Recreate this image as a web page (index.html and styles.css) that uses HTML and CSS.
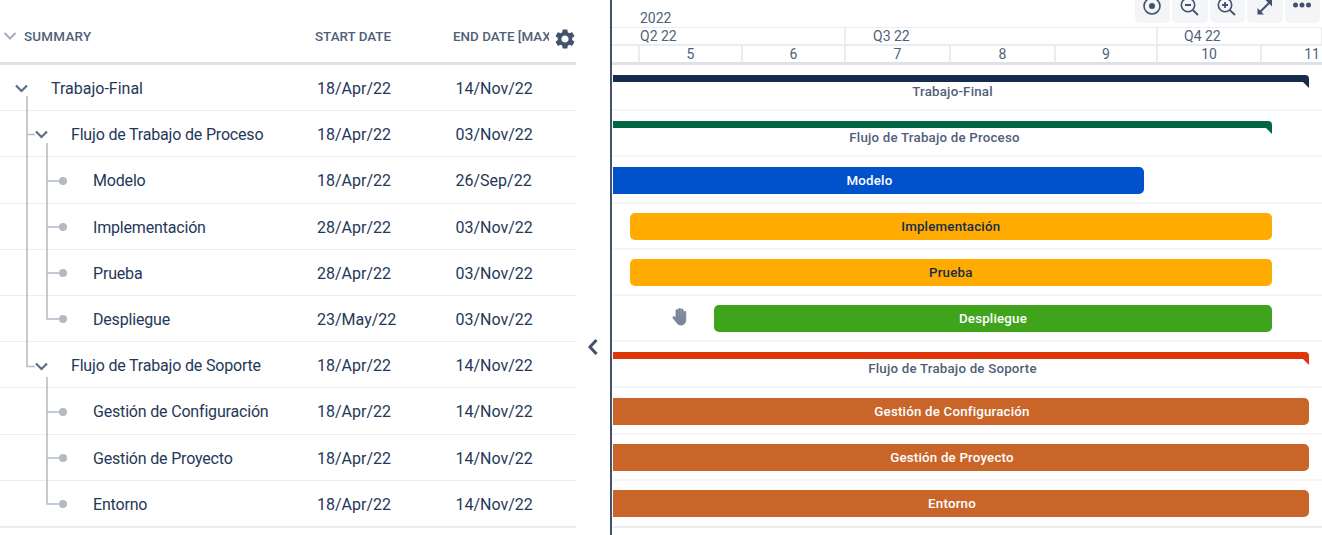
FILE: index.html
```html
<!DOCTYPE html>
<html lang="en">
<head>
    <meta charset="UTF-8">
    <title>Gantt</title>
    <link rel="stylesheet" href="styles.css">
</head>
<body>
    <div class="table">
        <div class="table-head">
            <svg class="head-chevron" width="14" height="10" viewBox="0 0 14 10"><path d="M1.500 2 7 7.500 12.500 2" fill="none" stroke="#a5adba" stroke-width="2"/></svg>
            <div class="head-summary">SUMMARY</div>
            <div class="head-start">START DATE</div>
            <div class="head-end">END DATE [MAX]</div>
            <svg class="gear" width="24" height="24" viewBox="0 0 24 24"><path fill="#42526e" d="M19.14 12.94c.04-.3.06-.61.06-.94 0-.32-.02-.64-.07-.94l2.03-1.58a.49.49 0 0 0 .12-.61l-1.92-3.32a.488.488 0 0 0-.59-.22l-2.39.96c-.5-.38-1.03-.7-1.62-.94l-.36-2.54a.484.484 0 0 0-.48-.41h-3.84c-.24 0-.43.17-.47.41l-.36 2.54c-.59.24-1.13.57-1.62.94l-2.39-.96c-.22-.08-.47 0-.59.22L2.74 8.87c-.12.21-.08.47.12.61l2.03 1.58c-.05.3-.09.63-.09.94s.02.64.07.94l-2.03 1.58a.49.49 0 0 0-.12.61l1.92 3.32c.12.22.37.29.59.22l2.39-.96c.5.38 1.03.7 1.62.94l.36 2.54c.05.24.24.41.48.41h3.84c.24 0 .44-.17.47-.41l.36-2.54c.59-.24 1.13-.56 1.62-.94l2.39.96c.22.08.47 0 .59-.22l1.92-3.32c.12-.22.07-.47-.12-.61l-2.01-1.58zM12 15.6c-1.98 0-3.6-1.62-3.6-3.6s1.62-3.6 3.6-3.6 3.6 1.62 3.6 3.6-1.62 3.6-3.6 3.6z"/></svg>
        </div>
        <div class="rows">
            <div class="row"><div class="col-summary lvl0">Trabajo-Final</div><div class="col-start">18/Apr/22</div><div class="col-end">14/Nov/22</div></div>
            <div class="row"><div class="col-summary lvl1">Flujo de Trabajo de Proceso</div><div class="col-start">18/Apr/22</div><div class="col-end">03/Nov/22</div></div>
            <div class="row"><div class="col-summary lvl2">Modelo</div><div class="col-start">18/Apr/22</div><div class="col-end">26/Sep/22</div></div>
            <div class="row"><div class="col-summary lvl2">Implementación</div><div class="col-start">28/Apr/22</div><div class="col-end">03/Nov/22</div></div>
            <div class="row"><div class="col-summary lvl2">Prueba</div><div class="col-start">28/Apr/22</div><div class="col-end">03/Nov/22</div></div>
            <div class="row"><div class="col-summary lvl2">Despliegue</div><div class="col-start">23/May/22</div><div class="col-end">03/Nov/22</div></div>
            <div class="row"><div class="col-summary lvl1">Flujo de Trabajo de Soporte</div><div class="col-start">18/Apr/22</div><div class="col-end">14/Nov/22</div></div>
            <div class="row"><div class="col-summary lvl2">Gestión de Configuración</div><div class="col-start">18/Apr/22</div><div class="col-end">14/Nov/22</div></div>
            <div class="row"><div class="col-summary lvl2">Gestión de Proyecto</div><div class="col-start">18/Apr/22</div><div class="col-end">14/Nov/22</div></div>
            <div class="row"><div class="col-summary lvl2">Entorno</div><div class="col-start">18/Apr/22</div><div class="col-end">14/Nov/22</div></div>

            <!-- tree connectors, y is relative to the top of the rows -->
            <svg class="tree" width="80" height="470" viewBox="0 0 80 470">
                <g fill="none" stroke="#b3bac5" stroke-width="1.500">
                    <path d="M27 31V301.500H35"/>
                    <path d="M27.500 69.500H35"/>
                    <path d="M47 78V254H59M47 116H59M47 162H59M47 208H59"/>
                    <path d="M47 312V439H59M47 347H59M47 393H59"/>
                </g>
                <g fill="#b3bac5">
                    <circle cx="63" cy="116" r="4"/>
                    <circle cx="63" cy="162" r="4"/>
                    <circle cx="63" cy="208" r="4"/>
                    <circle cx="63" cy="254" r="4"/>
                    <circle cx="63" cy="347" r="4"/>
                    <circle cx="63" cy="393" r="4"/>
                    <circle cx="63" cy="439" r="4"/>
                </g>
                <g fill="none" stroke="#5e6c84" stroke-width="2.200">
                    <path d="M16 20.500 21.500 26 27 20.500"/>
                    <path d="M36 66.500 41.500 72 47 66.500"/>
                    <path d="M36 298.500 41.500 304 47 298.500"/>
                </g>
            </svg>
        </div>
    </div>

    <div class="splitter">
        <svg width="12" height="18" viewBox="0 0 12 18"><path d="M9.500 2 3 9l6.500 7" fill="none" stroke="#42526e" stroke-width="3"/></svg>
    </div>

    <div class="gantt">
        <div class="toolbar">
            <button class="tool"><svg width="20" height="20" viewBox="0 0 20 20"><circle cx="10" cy="6" r="8" fill="none" stroke="#42526e" stroke-width="1.600"/><circle cx="10" cy="6" r="3" fill="#42526e"/></svg></button>
            <button class="tool"><svg width="20" height="20" viewBox="0 0 20 20"><circle cx="8" cy="5" r="6.700" fill="none" stroke="#42526e" stroke-width="1.600"/><path d="M12.800 10 18 15M5 5h6" fill="none" stroke="#42526e" stroke-width="1.800"/></svg></button>
            <button class="tool"><svg width="20" height="20" viewBox="0 0 20 20"><circle cx="8" cy="5" r="6.700" fill="none" stroke="#42526e" stroke-width="1.600"/><path d="M12.800 10 18 15M5 5h6M8 2v6" fill="none" stroke="#42526e" stroke-width="1.800"/></svg></button>
            <button class="tool"><svg width="20" height="20" viewBox="0 0 20 20"><path d="M4 13 15 2" stroke="#42526e" stroke-width="2" fill="none"/><path d="M2.500 8v6.500H9zM17 0h-6.500l6.500 6.500z" fill="#42526e"/></svg></button>
            <button class="tool"><svg width="20" height="20" viewBox="0 0 20 20"><g fill="#42526e"><circle cx="3.500" cy="5" r="2.500"/><circle cx="10" cy="5" r="2.500"/><circle cx="16.500" cy="5" r="2.500"/></g></svg></button>
        </div>

        <div class="timeline">
            <div class="band band-year"><span>2022</span></div>
            <div class="band band-quarter">
                <div class="q" style="width: 234px">Q2 22</div>
                <div class="q" style="width: 312px">Q3 22</div>
                <div class="q q-last" style="width: 165px">Q4 22</div>
            </div>
            <div class="band band-month">
                <div class="m" style="width: 28px"></div>
                <div class="m" style="width: 103px">5</div>
                <div class="m" style="width: 103px">6</div>
                <div class="m" style="width: 105px">7</div>
                <div class="m" style="width: 105px">8</div>
                <div class="m" style="width: 102px">9</div>
                <div class="m" style="width: 104px">10</div>
                <div class="m m-last">11</div>
            </div>
        </div>

        <div class="bars">
            <div class="lane"><div class="summary-bar navy" style="margin-left: -18px; width: 714px"></div><div class="summary-label" style="width: 679px">Trabajo-Final</div></div>
            <div class="lane"><div class="summary-bar green" style="margin-left: -18px; width: 677px"></div><div class="summary-label" style="width: 643px">Flujo de Trabajo de Proceso</div></div>
            <div class="lane"><div class="bar blue" style="margin-left: -18px; width: 549px">Modelo</div></div>
            <div class="lane"><div class="bar amber" style="margin-left: 16.500px; width: 642.500px">Implementación</div></div>
            <div class="lane"><div class="bar amber" style="margin-left: 16.500px; width: 642.500px">Prueba</div></div>
            <div class="lane">
                <div class="bar lime" style="margin-left: 101px; width: 558px">Despliegue</div>
                <svg class="hand" width="18" height="18" viewBox="0 0 18 18"><path fill="#7a869a" stroke="#7a869a" stroke-width=".8" d="M5 2.500a1 1 0 0 1 2 0V8h.6V1.300a1 1 0 0 1 2 0V8h.6V2a1 1 0 0 1 2 0v6.500h.6V4.300a1 1 0 0 1 2 0V12c0 3-2 5-4.500 5H9.500C7.500 17 6.500 16 5.500 14.500L2.200 10.300c-.9-1.200.5-2.300 1.500-1.400L5 10z"/></svg>
            </div>
            <div class="lane"><div class="summary-bar red" style="margin-left: -18px; width: 714px"></div><div class="summary-label" style="width: 679px">Flujo de Trabajo de Soporte</div></div>
            <div class="lane"><div class="bar orange" style="margin-left: -18px; width: 714px">Gestión de Configuración</div></div>
            <div class="lane"><div class="bar orange" style="margin-left: -18px; width: 714px">Gestión de Proyecto</div></div>
            <div class="lane"><div class="bar orange" style="margin-left: -18px; width: 714px">Entorno</div></div>
        </div>
    </div>
</body>
</html>
```

FILE: styles.css
```css
html, body {
    margin: 0;
    height: 535px;
    overflow: hidden;
    background: #fff;
}
body {
    display: flex;
    font-family: Roboto, "Liberation Sans", sans-serif;
    color: #253858;
}

/* left table */
.table {
    width: 576px;
    flex: none;
}
.table-head {
    position: relative;
    display: flex;
    align-items: center;
    height: 65px;
    padding-top: 10px;
    box-sizing: border-box;
    border-bottom: 3px solid #dfe1e6;
    font-size: 13.400px;
    font-weight: 500;
    color: #505f79;
}
.head-chevron {
    position: absolute;
    left: 3px;
    top: 31px;
}
.gear {
    position: absolute;
    left: 553px;
    top: 27px;
}
.head-summary {
    padding-left: 24px;
    width: 291px;
    flex: none;
    letter-spacing: 0.25px;
}
.head-start {
    width: 138px;
    flex: none;
}
.head-end {
    width: 96px;
    flex: none;
    overflow: hidden;
    white-space: nowrap;
}
.rows {
    position: relative;
}
.row {
    display: flex;
    align-items: center;
    height: 46.200px;
    padding-top: 2px;
    box-sizing: border-box;
    border-bottom: 1px solid #ebecf0;
    font-size: 16px;
}
.row:last-of-type {
    height: 47.200px;
    border-bottom-width: 2px;
}
.col-summary {
    width: 317px;
    flex: none;
    box-sizing: border-box;
}
.col-start {
    width: 138.500px;
    flex: none;
}
.col-end {
    flex: none;
}
.lvl0 {
    padding-left: 51px;
}
.lvl1 {
    padding-left: 71px;
    letter-spacing: -0.18px;
}
.lvl2 {
    padding-left: 93px;
    letter-spacing: -0.18px;
}
.tree {
    position: absolute;
    left: 0;
    top: 0;
}

/* collapse handle between table and chart */
.splitter {
    width: 34px;
    flex: none;
    display: flex;
    align-items: flex-start;
    justify-content: center;
    padding-top: 338px;
    box-sizing: border-box;
}

/* chart */
.gantt {
    position: relative;
    flex: 1;
    min-width: 0;
    border-left: 2px solid #42526e;
}
.toolbar {
    position: absolute;
    right: 2px;
    top: 0;
    display: flex;
    gap: 2px;
}
.tool {
    width: 35.500px;
    height: 23px;
    padding: 0;
    border: none;
    border-radius: 0 0 5px 5px;
    background: #f4f5f7;
    display: flex;
    justify-content: center;
}
.timeline {
    height: 65px;
    color: #505f79;
    font-size: 14px;
    border-bottom: 3px solid #dfe1e6;
    box-sizing: border-box;
}
.band {
    box-sizing: border-box;
    display: flex;
    white-space: nowrap;
}
.band-year {
    height: 28px;
    padding: 10px 0 0 28px;
    line-height: 17px;
    border-bottom: 1px solid #ebecf0;
}
.band-quarter {
    height: 18px;
    line-height: 16px;
    border-bottom: 2px solid #ebecf0;
}
.q {
    flex: none;
    box-sizing: border-box;
    padding-left: 27px;
    border-right: 2px solid #ebecf0;
}
.q:first-child {
    padding-left: 28px;
}
.q-last {
    padding-left: 26px;
}
.band-month {
    height: 16px;
    line-height: 17px;
}
.m {
    flex: none;
    box-sizing: border-box;
    text-align: center;
    border-right: 2px solid #ebecf0;
}
.m-last {
    border-right: none;
    width: 100px;
}
.bars {
    margin-left: 1px;
}
.lane {
    position: relative;
    height: 46.200px;
    box-sizing: border-box;
    border-bottom: 2px solid #f4f5f7;
    overflow: hidden;
}
.lane:last-child {
    height: 47.200px;
    border-bottom-color: #ebecf0;
}
.bar {
    position: relative;
    top: 9.500px;
    height: 27px;
    line-height: 27px;
    border-radius: 5px;
    text-align: center;
    font-size: 13.300px;
    font-weight: 500;
    letter-spacing: 0.2px;
    color: #fff;
    white-space: nowrap;
}
.blue {
    background: #0052cc;
}
.amber {
    background: #ffab00;
    color: #172b4d;
}
.lime {
    background: #3fa41c;
}
.orange {
    background: #ca6529;
}
.summary-bar {
    position: relative;
    top: 9.500px;
    height: 7px;
    border-radius: 0 4px 0 0;
}
.summary-bar::after {
    content: "";
    position: absolute;
    right: 0;
    top: 7px;
    border-style: solid;
    border-width: 6px 0 0 6px;
    border-color: transparent;
    border-top-color: inherit;
}
.navy {
    background: #172b4d;
    border-top-color: #172b4d;
}
.green {
    background: #006644;
    border-top-color: #006644;
}
.red {
    background: #de350b;
    border-top-color: #de350b;
}
.summary-label {
    position: relative;
    top: 11.500px;
    line-height: 16px;
    text-align: center;
    font-size: 13.300px;
    font-weight: 500;
    letter-spacing: 0.2px;
    color: #505f79;
    white-space: nowrap;
}
.hand {
    position: absolute;
    left: 58px;
    top: 12px;
}
```
